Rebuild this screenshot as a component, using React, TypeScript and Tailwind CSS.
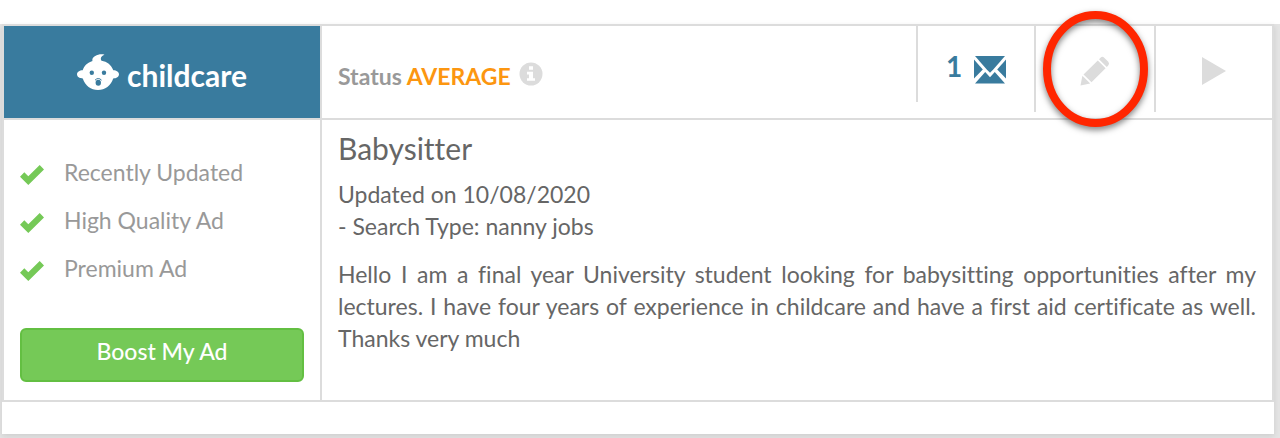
const checks = ["Recently Updated", "High Quality Ad", "Premium Ad"]

function BabyIcon() {
  return (
    <svg width="42" height="36" viewBox="0 0 42 36" aria-hidden="true">
      <path
        fill="#fff"
        d="M27.500 .8C22 -1 14 3 15.500 7C10.500 8.500 7 12 5.700 16.200C2.500 16.200 0 18 0 20.300C0 22.700 2.500 24.500 5.800 24.500C8 31.500 14 36 21 36S34 31.500 36.200 24.500C39.500 24.500 42 22.700 42 20.300C42 18 39.500 16.200 36.300 16.200C34.500 11 30 7.500 24.500 6.700C23 4.500 24 2 27.500 .8Z"
      />
      <g fill="#397b9e">
        <circle cx="14.800" cy="18.800" r="2.200" />
        <circle cx="27" cy="18.800" r="2.200" />
        <ellipse cx="21.300" cy="28.800" rx="2.700" ry="3" />
      </g>
      <path d="M18 26.200Q21.300 22.800 24.600 26.200" fill="none" stroke="#397b9e" strokeWidth="1" />
    </svg>
  )
}

function InfoIcon() {
  return (
    <svg width="24" height="24" viewBox="0 0 24 24" aria-hidden="true">
      <circle cx="12" cy="12" r="11.500" fill="#dcdcdc" />
      <path fill="#fff" d="M10 4.200h4v3.600h-4zM8 9.800h6v6.400h2v2.600H8v-2.600h2v-3.800H8z" />
    </svg>
  )
}

function EnvelopeIcon() {
  return (
    <svg width="32" height="28" viewBox="0 0 32 28" aria-hidden="true">
      <g fill="#397b9e">
        <path d="M1 0H31L19.500 13.200L16 16.800L12.500 13.200Z" />
        <path d="M0 3.500L8.800 13.500L0 22.500Z" />
        <path d="M32 3.500L23.200 13.500L32 22.500Z" />
        <path d="M1 27.500L11.200 16L16 21.200L20.800 16L31 27.500Z" />
      </g>
    </svg>
  )
}

function PencilIcon() {
  return (
    <svg width="30" height="30" viewBox="0 0 30 30" aria-hidden="true">
      <g fill="#dcdcdc">
        <path d="M20.500 1.800Q22.300 0 24.200 1.700L28.300 5.800Q30 7.800 28.200 9.500L26.800 10.900L19 3.200Z" />
        <path d="M17.800 4.400L25.600 12.200L11.500 26.200L9.500 24.200L3.500 18.500Z" />
        <path d="M2.400 19.800L10.200 27.600L.5 29.500Z" />
      </g>
    </svg>
  )
}

function CheckIcon() {
  return (
    <svg width="24" height="20" viewBox="0 0 24 20" aria-hidden="true">
      <path d="M0 11.700L4.300 7.300L8.300 11.200L19.700 0L24 4.400L8.300 20Z" fill="#75c957" />
    </svg>
  )
}

export default function App() {
  return (
    <div className="bg-white pt-6 font-['Lato','Open_Sans',sans-serif] text-[23px] text-[#666] [font-variant-ligatures:none]">
      <div className="bg-[#e4e4e4] pr-1.5 pb-1 pl-0.5">
        <article className="bg-white pb-8 shadow-[0_2px_6px_rgba(0,0,0,0.1)]">
          <div className="flex border-2 border-[#dcdcdc]">
            {/* Category and quality checks */}
            <aside className="flex w-[318px] shrink-0 flex-col border-r-2 border-[#dcdcdc]">
              <div className="flex h-[94px] items-center justify-center gap-2 border-b-2 border-[#dcdcdc] bg-[#397b9e] text-[30px] font-bold text-white">
                <BabyIcon />
                <span className="pt-1.5">childcare</span>
              </div>
              <ul className="px-4 pt-7 text-[#999]">
                {checks.map(label => (
                  <li key={label} className="flex h-12 items-center gap-5">
                    <span className="pt-1.5"><CheckIcon /></span>
                    {label}
                  </li>
                ))}
              </ul>
              <div className="px-4 pt-9 pb-[18px]">
                <button
                  type="button"
                  className="h-[54px] w-full rounded-md border-2 border-[#63bf42] bg-[#75c957] pb-2 leading-8 font-medium text-white"
                >
                  Boost My Ad
                </button>
              </div>
            </aside>

            <section className="min-w-0 flex-1">
              {/* Status bar */}
              <header className="flex h-[94px] items-start border-b-2 border-[#dcdcdc]">
                <div className="flex h-full flex-1 items-center gap-2 pl-4 font-bold">
                  <p className="pt-2">
                    <span className="text-[#999]">Status</span>{" "}
                    <span className="text-[#fc9610]">AVERAGE</span>
                  </p>
                  <button type="button" aria-label="About status" className="pt-1"><InfoIcon /></button>
                </div>
                <a
                  href="#messages"
                  aria-label="1 message"
                  className="flex h-[76px] w-[118px] items-start justify-center gap-3 border-l-2 border-[#dcdcdc] pt-6 text-[28px] leading-8 font-bold text-[#397b9e]"
                >
                  1
                  <span className="pt-1.5"><EnvelopeIcon /></span>
                </a>
                <button
                  type="button"
                  aria-label="Edit ad"
                  className="relative flex h-[86px] w-[120px] items-center justify-center border-l-2 border-[#dcdcdc] pt-1"
                >
                  <PencilIcon />
                  <svg
                    className="absolute -top-5 left-0 drop-shadow-[0_3px_3px_rgba(0,0,0,0.5)]"
                    width="118"
                    height="126"
                    viewBox="0 0 118 126"
                    aria-hidden="true"
                  >
                    <ellipse cx="59.500" cy="63" rx="48.500" ry="54" fill="none" stroke="#ff2600" strokeWidth="8" />
                  </svg>
                </button>
                <button
                  type="button"
                  aria-label="Activate ad"
                  className="flex h-[86px] w-[118px] items-center justify-center border-l-2 border-[#dcdcdc] pt-1"
                >
                  <svg width="24" height="28" viewBox="0 0 24 28" aria-hidden="true">
                    <path d="M0 0L24 14L0 28Z" fill="#dcdcdc" />
                  </svg>
                </button>
              </header>

              {/* Ad text */}
              <div className="px-4 pt-2 leading-8">
                <h2 className="text-[30px] leading-10">Babysitter</h2>
                <p className="pt-2.5">
                  Updated on 10/08/2020
                  <br />- Search Type: nanny jobs
                </p>
                <p className="pt-4 text-justify">
                  Hello I am a final year University student looking for babysitting opportunities after my
                  lectures. I have four years of experience in childcare and have a first aid certificate as well.
                  Thanks very much
                </p>
              </div>
            </section>
          </div>
        </article>
      </div>
    </div>
  )
}
